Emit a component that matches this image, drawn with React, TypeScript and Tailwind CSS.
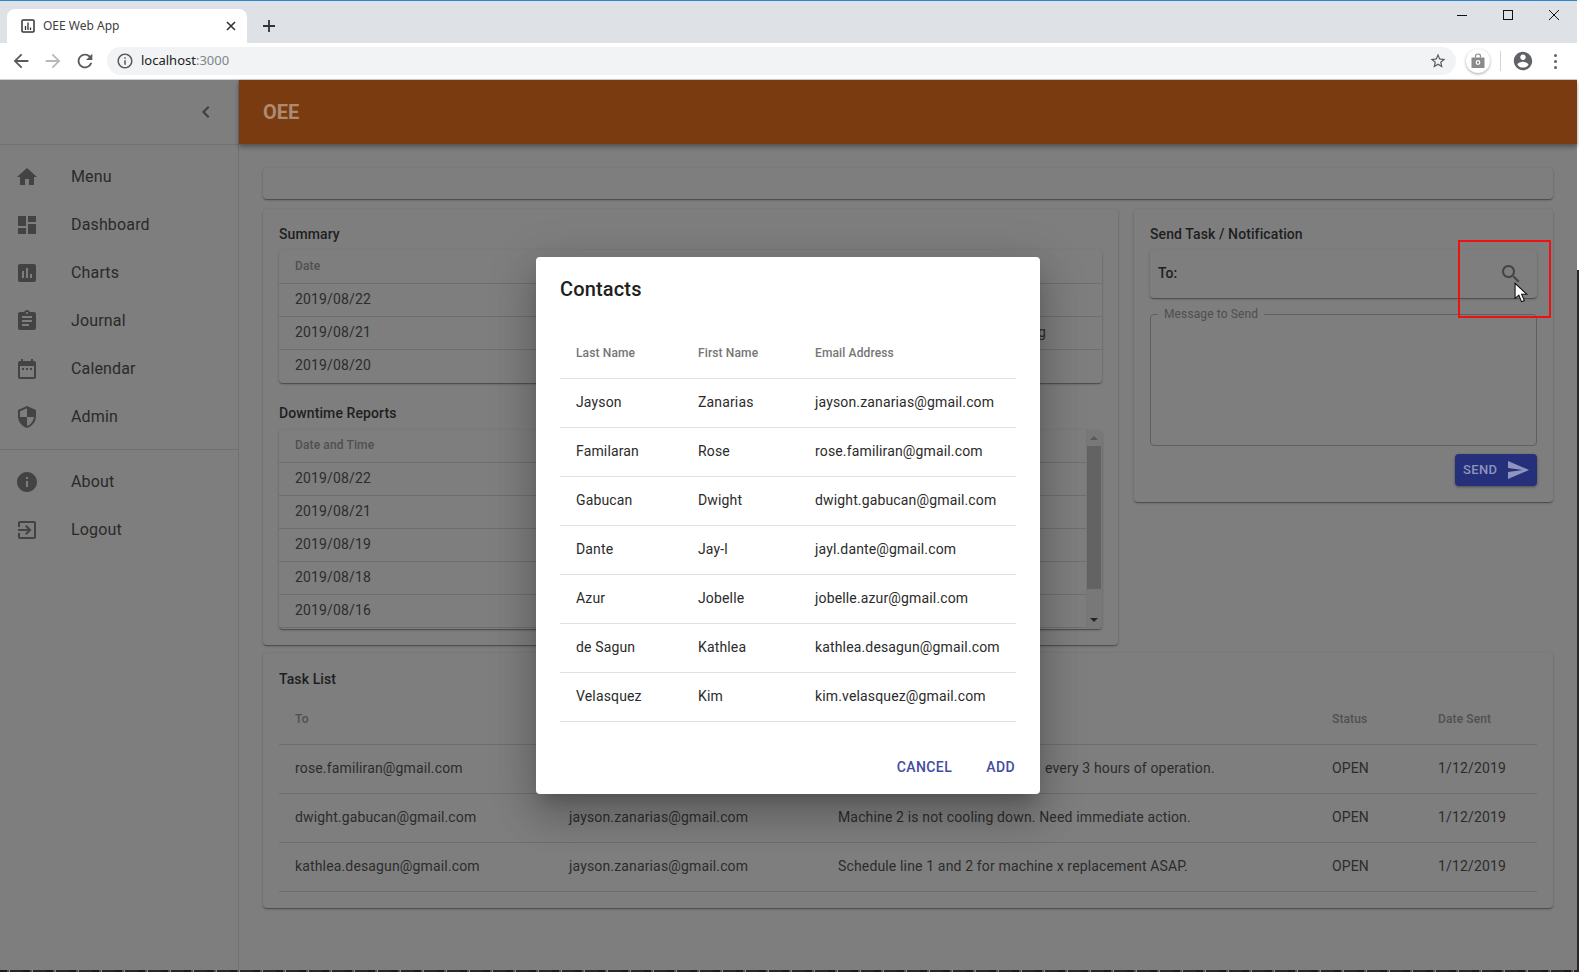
import React from "react";

const P = {
  home: "M10 20v-6h4v6h5v-8h3L12 3 2 12h3v8z",
  dash: "M3 13h8V3H3v10zm0 8h8v-6H3v6zm10 0h8V11h-8v10zm0-18v6h8V3h-8z",
  chart: "M19 3H5c-1.1 0-2 .9-2 2v14c0 1.1.9 2 2 2h14c1.1 0 2-.9 2-2V5c0-1.1-.9-2-2-2zM9 17H7v-7h2v7zm4 0h-2V7h2v10zm4 0h-2v-4h2v4z",
  journal: "M19 3h-4.18C14.4 1.84 13.3 1 12 1c-1.3 0-2.4.84-2.82 2H5c-1.1 0-2 .9-2 2v14c0 1.1.9 2 2 2h14c1.1 0 2-.9 2-2V5c0-1.1-.9-2-2-2zm-7 0c.55 0 1 .45 1 1s-.45 1-1 1-1-.45-1-1 .45-1 1-1zm2 14H7v-2h7v2zm3-4H7v-2h10v2zm0-4H7V7h10v2z",
  cal: "M9 11H7v2h2v-2zm4 0h-2v2h2v-2zm4 0h-2v2h2v-2zm2-7h-1V2h-2v2H8V2H6v2H5c-1.11 0-1.99.9-1.99 2L3 20c0 1.1.89 2 2 2h14c1.1 0 2-.9 2-2V6c0-1.1-.9-2-2-2zm0 16H5V9h14v11z",
  shield: "M12 1L3 5v6c0 5.55 3.84 10.74 9 12 5.16-1.26 9-6.45 9-12V5l-9-4zm0 10.99h7c-.53 4.12-3.28 7.79-7 8.94V12H5V6.3l7-3.11v8.8z",
  info: "M12 2C6.48 2 2 6.48 2 12s4.48 10 10 10 10-4.48 10-10S17.52 2 12 2zm1 15h-2v-6h2v6zm0-8h-2V7h2v2z",
  exit: "M10.09 15.59L11.5 17l5-5-5-5-1.41 1.41L12.67 11H3v2h9.67l-2.58 2.59zM19 3H5c-1.11 0-2 .9-2 2v4h2V5h14v14H5v-4H3v4c0 1.1.89 2 2 2h14c1.1 0 2-.9 2-2V5c0-1.1-.9-2-2-2z",
  search: "M15.5 14h-.79l-.28-.27C15.41 12.59 16 11.11 16 9.5 16 5.91 13.09 3 9.5 3S3 5.91 3 9.5 5.91 16 9.5 16c1.61 0 3.09-.59 4.23-1.57l.27.28v.79l5 4.99L20.49 19l-4.99-5zm-6 0C7.01 14 5 11.99 5 9.5S7.01 5 9.5 5 14 7.01 14 9.5 11.99 14 9.5 14z",
  send: "M2.01 21L23 12 2.01 3 2 10l15 2-15 2z",
  chevron: "M15.41 7.41L14 6l-6 6 6 6 1.41-1.41L10.83 12z",
  back: "M20 11H7.83l5.59-5.59L12 4l-8 8 8 8 1.41-1.41L7.83 13H20v-2z",
  forward: "M12 4l-1.41 1.41L16.17 11H4v2h12.17l-5.58 5.59L12 20l8-8z",
  reload: "M17.65 6.35C16.2 4.9 14.21 4 12 4c-4.42 0-7.99 3.58-7.99 8s3.57 8 7.99 8c3.73 0 6.84-2.55 7.73-6h-2.08c-.82 2.33-3.04 4-5.65 4-3.31 0-6-2.69-6-6s2.69-6 6-6c1.66 0 3.14.69 4.22 1.78L13 11h7V4l-2.35 2.35z",
  infoOut: "M11 7h2v2h-2zm0 4h2v6h-2zm1-9C6.48 2 2 6.48 2 12s4.48 10 10 10 10-4.48 10-10S17.52 2 12 2zm0 18c-4.41 0-8-3.59-8-8s3.59-8 8-8 8 3.59 8 8-3.59 8-8 8z",
  star: "M22 9.24l-7.19-.62L12 2 9.19 8.63 2 9.24l5.46 4.73L5.82 21 12 17.27 18.18 21l-1.63-7.03L22 9.24zM12 15.4l-3.76 2.27 1-4.28-3.32-2.88 4.38-.38L12 6.1l1.71 4.04 4.38.38-3.32 2.88 1 4.28L12 15.4z",
  avatar: "M12 2C6.48 2 2 6.48 2 12s4.48 10 10 10 10-4.48 10-10S17.52 2 12 2zm0 3c1.66 0 3 1.34 3 3s-1.34 3-3 3-3-1.34-3-3 1.34-3 3-3zm0 14.2c-2.5 0-4.71-1.28-6-3.22.03-1.99 4-3.08 6-3.08 1.99 0 5.97 1.09 6 3.08-1.29 1.94-3.5 3.22-6 3.22z",
};

function Icon({ d, className }: { d: string; className: string }) {
  return (
    <svg viewBox="0 0 24 24" className={className} fill="currentColor">
      <path d={d} />
    </svg>
  );
}

const paper = "rounded bg-[#7e7e7e] shadow-[0_1px_3px_rgba(0,0,0,0.2),0_1px_1px_rgba(0,0,0,0.16),0_2px_1px_-1px_rgba(0,0,0,0.16)]";
const head = "text-xs font-medium tracking-[0.01071em] text-[#505050]";
const body = "text-sm tracking-[0.01071em] text-[#2c2c2c]";
const title = "text-sm font-medium leading-5 tracking-[0.00714em] text-[#1e1e1e]";

function BrowserChrome() {
  return (
    <div className="shrink-0 font-['Noto_Sans',sans-serif]">
      <div className="h-px bg-[#2b86cd]" />
      <div className="relative flex h-[42px] items-end bg-[#dee1e6] pl-[7px]">
        <div className="flex h-[34px] w-[240px] items-center rounded-t-lg bg-white pl-[14px] pr-[11px]">
          <svg viewBox="0 0 14 14" className="h-[14px] w-[14px] text-[#333]" fill="none" stroke="currentColor">
            <rect x="1" y="1" width="12" height="12" rx="1" strokeWidth="1.5" />
            <path d="M4.5 11V7M7 11V3.5M9.5 11V8.5" strokeWidth="1.3" />
          </svg>
          <span className="ml-2 flex-1 text-xs text-[#3c4043]">OEE Web App</span>
          <svg viewBox="0 0 10 10" className="h-[10px] w-[10px] text-[#333]" fill="none" stroke="currentColor" strokeWidth="1.6">
            <path d="M1 1l8 8M9 1l-8 8" />
          </svg>
        </div>
        <svg viewBox="0 0 12 12" className="mb-[11px] ml-4 h-3 w-3 text-[#333]" fill="none" stroke="currentColor" strokeWidth="1.8">
          <path d="M6 0v12M0 6h12" />
        </svg>
        <div className="absolute right-[18px] top-[9px] flex items-center gap-[36px] text-[#111]">
          <div className="h-px w-[10px] bg-[#111]" />
          <div className="h-[10px] w-[10px] border border-[#111]" />
          <svg viewBox="0 0 10 10" className="h-[10px] w-[10px]" fill="none" stroke="currentColor">
            <path d="M0 0l10 10M10 0L0 10" />
          </svg>
        </div>
      </div>
      <div className="flex h-[37px] items-center border-b border-[#cfcfcf] bg-white pl-[10px] pr-[12px]">
        <Icon d={P.back} className="h-[22px] w-[22px] text-[#5a5a5a]" />
        <Icon d={P.forward} className="ml-[10px] h-[22px] w-[22px] text-[#b8b8b8]" />
        <Icon d={P.reload} className="ml-[10px] h-[22px] w-[22px] text-[#5a5a5a]" />
        <div className="ml-[11px] flex h-[28px] w-[1349px] items-center rounded-full bg-[#f1f3f4] pl-[9px] pr-[9px]">
          <Icon d={P.infoOut} className="h-[18px] w-[18px] text-[#5a5a5a]" />
          <span className="ml-[7px] flex-1 text-[13px] text-[#202124]">
            localhost<span className="text-[#80868b]">:3000</span>
          </span>
          <Icon d={P.star} className="h-[18px] w-[18px] text-[#5a5a5a]" />
        </div>
        <div className="ml-[10px] flex h-[24px] w-[24px] items-center justify-center rounded-full bg-white shadow-[0_1px_3px_rgba(0,0,0,0.35)]">
          <svg viewBox="0 0 16 16" className="h-[16px] w-[16px] text-[#8a8a8a]" fill="currentColor">
            <path d="M1.5 4.5h13V15h-13z" />
            <path d="M5.5 4.5V3a2.5 2 0 015 0v1.5" fill="none" stroke="currentColor" strokeWidth="1.2" />
            <circle cx="8" cy="9.5" r="1.8" fill="none" stroke="#fff" strokeWidth="1.2" />
          </svg>
        </div>
        <div className="ml-[10px] h-[20px] w-px bg-[#d5d5d5]" />
        <Icon d={P.avatar} className="ml-[11px] h-[22px] w-[22px] text-[#5f6368]" />
        <div className="ml-[20px] flex flex-col gap-[3px]">
          <div className="h-[3px] w-[3px] rounded-full bg-[#5f6368]" />
          <div className="h-[3px] w-[3px] rounded-full bg-[#5f6368]" />
          <div className="h-[3px] w-[3px] rounded-full bg-[#5f6368]" />
        </div>
      </div>
    </div>
  );
}

const nav1 = [
  ["Menu", P.home],
  ["Dashboard", P.dash],
  ["Charts", P.chart],
  ["Journal", P.journal],
  ["Calendar", P.cal],
  ["Admin", P.shield],
];
const nav2 = [
  ["About", P.info],
  ["Logout", P.exit],
];

function NavItem({ label, d }: { label: string; d: string }) {
  return (
    <div className="flex h-12 items-center pl-[15px]">
      <Icon d={d} className="h-6 w-6 text-[#434343]" />
      <span className="ml-[32px] text-base tracking-[0.00938em] text-[#2a2a2a]">{label}</span>
    </div>
  );
}

function Sidebar() {
  return (
    <div className="flex w-[239px] shrink-0 flex-col border-r border-[#717171] bg-[#7e7e7e]">
      <div className="flex h-[65px] items-center justify-end border-b border-[#717171] pr-[20px]">
        <Icon d={P.chevron} className="h-6 w-6 text-[#3e3e3e]" />
      </div>
      <div className="border-b border-[#717171] py-2">
        {nav1.map(([l, d]) => (
          <NavItem key={l} label={l} d={d} />
        ))}
      </div>
      <div className="py-2">
        {nav2.map(([l, d]) => (
          <NavItem key={l} label={l} d={d} />
        ))}
      </div>
    </div>
  );
}

function DateRow({ date, extra, last }: { date: string; extra?: string; last?: boolean }) {
  return (
    <div className={`flex h-[33px] items-center px-4 pb-[3px] ${last ? "" : "border-b border-[#6e6e6e]"}`}>
      <span className={`${body} w-[743px]`}>{date}</span>
      {extra && <span className={body}>{extra}</span>}
    </div>
  );
}

function SummaryCard() {
  return (
    <div className={`${paper} h-[436px] w-[855px] shrink-0 px-4 pt-[15px]`}>
      <div className={`${title} mb-[6px]`}>Summary</div>
      <div className={paper}>
        <div className={`flex h-[34px] items-center border-b border-[#6e6e6e] px-4 pb-px ${head}`}>Date</div>
        <DateRow date="2019/08/22" />
        <DateRow date="2019/08/21" extra="g" />
        <DateRow date="2019/08/20" last />
      </div>
      <div className={`${title} mb-[7px] mt-[20px]`}>Downtime Reports</div>
      <div className={`${paper} flex h-[199px] overflow-hidden`}>
        <div className="flex-1">
          <div className={`flex h-[33px] items-center border-b border-[#6e6e6e] px-4 pb-[2px] ${head}`}>Date and Time</div>
          {["2019/08/22", "2019/08/21", "2019/08/19", "2019/08/18", "2019/08/16"].map((d) => (
            <DateRow key={d} date={d} />
          ))}
        </div>
        <div className="flex w-[16px] flex-col items-center bg-[#787878]">
          <div className="mt-[6px] h-0 w-0 border-x-[4px] border-b-[4px] border-x-transparent border-b-[#5a5a5a]" />
          <div className="mt-[6px] h-[143px] w-[14px] bg-[#636363]" />
          <div className="mt-[29px] h-0 w-0 border-x-[4px] border-t-[4px] border-x-transparent border-t-[#262626]" />
        </div>
      </div>
    </div>
  );
}

function SendCard() {
  return (
    <div className={`${paper} relative h-[293px] w-[419px] shrink-0 px-4 pt-[15px]`}>
      <div className={`${title} mb-[6px]`}>Send Task / Notification</div>
      <div className={`${paper} flex h-[48px] items-center justify-between pl-2 pr-[14px]`}>
        <span className="pb-[2px] text-sm font-medium text-[#1e1e1e]">To:</span>
        <Icon d={P.search} className="h-6 w-6 text-[#444]" />
      </div>
      <fieldset className="mt-[8px] h-[140px] rounded border border-[#5f5f5f]">
        <legend className="ml-[7px] px-[6px] text-xs tracking-[0.01em] text-[#4f4f4f]">Message to Send</legend>
      </fieldset>
      <div className="mt-[8px] flex justify-end">
        <div className="flex h-8 w-[82px] items-center rounded bg-[#243079] pl-2 shadow-[0_1px_3px_rgba(0,0,0,0.4)]">
          <span className="text-[13px] font-medium tracking-[0.03em] text-[#8e94bd]">SEND</span>
          <Icon d={P.send} className="ml-[8px] h-6 w-6 text-[#9095bd]" />
        </div>
      </div>
      <div className="absolute left-[324px] top-[31px] h-[78px] w-[93px] border-2 border-[#ee1111]" />
      <svg viewBox="0 0 13 19" className="absolute left-[380px] top-[73px] h-[21px] w-[14px]">
        <path d="M1 1v14l3.5-3 2.5 6 2.6-1-2.5-5.8H12z" fill="#fff" stroke="#111" strokeWidth="1" />
      </svg>
    </div>
  );
}

const tasks = [
  ["rose.familiran@gmail.com", "jayson.zanarias@gmail.com", "every 3 hours of operation."],
  ["dwight.gabucan@gmail.com", "jayson.zanarias@gmail.com", "Machine 2 is not cooling down. Need immediate action."],
  ["kathlea.desagun@gmail.com", "jayson.zanarias@gmail.com", "Schedule line 1 and 2 for machine x replacement ASAP."],
];

const taskGrid = "grid grid-cols-[274px_269px_494px_106px_115px] items-center border-b border-[#6e6e6e] [&>*]:px-4";

function TaskCard() {
  return (
    <div className={`${paper} mt-2 h-[255px] px-4 pt-4`}>
      <div className={title}>Task List</div>
      <div className={`${taskGrid} mt-[5px] h-[51px] pb-px ${head}`}>
        <span>To</span>
        <span>From</span>
        <span>Message</span>
        <span>Status</span>
        <span>Date Sent</span>
      </div>
      {tasks.map((t, i) => (
        <div key={t[0]} className={`${taskGrid} h-[49px] pb-[2px] ${body}`}>
          <span>{t[0]}</span>
          <span>{t[1]}</span>
          <span>
            <span className={i === 0 ? "ml-[207px]" : ""}>{t[2]}</span>
          </span>
          <span>OPEN</span>
          <span>1/12/2019</span>
        </div>
      ))}
    </div>
  );
}

const contacts = [
  ["Jayson", "Zanarias", "jayson.zanarias@gmail.com"],
  ["Familaran", "Rose", "rose.familiran@gmail.com"],
  ["Gabucan", "Dwight", "dwight.gabucan@gmail.com"],
  ["Dante", "Jay-l", "jayl.dante@gmail.com"],
  ["Azur", "Jobelle", "jobelle.azur@gmail.com"],
  ["de Sagun", "Kathlea", "kathlea.desagun@gmail.com"],
  ["Velasquez", "Kim", "kim.velasquez@gmail.com"],
];

const contactGrid = "grid grid-cols-[122px_117px_217px] items-center border-b border-[#e0e0e0] [&>*]:px-4";

function ContactsDialog() {
  return (
    <div className="absolute inset-0 flex items-center justify-center pr-px">
      <div className="h-[537px] w-[504px] rounded bg-white px-6 pt-4 shadow-[0_11px_15px_-7px_rgba(0,0,0,0.2),0_24px_38px_3px_rgba(0,0,0,0.14),0_9px_46px_8px_rgba(0,0,0,0.12)]">
        <div className="text-xl font-medium leading-8 tracking-[0.0075em] text-[#202020]">Contacts</div>
        <div className={`${contactGrid} mt-[21px] h-[53px] pt-[3px] text-xs font-medium tracking-[0.01071em] text-[#757575]`}>
          <span>Last Name</span>
          <span>First Name</span>
          <span>Email Address</span>
        </div>
        {contacts.map((c) => (
          <div key={c[2]} className={`${contactGrid} h-[49px] pb-[2px] text-sm tracking-[0.01071em] text-[#2b2b2b]`}>
            <span>{c[0]}</span>
            <span>{c[1]}</span>
            <span>{c[2]}</span>
          </div>
        ))}
        <div className="mt-[35px] flex justify-end gap-[34px] pr-px text-sm font-medium leading-5 tracking-[0.03em] text-[#434c9f]">
          <span>CANCEL</span>
          <span>ADD</span>
        </div>
      </div>
    </div>
  );
}

export default function App() {
  return (
    <div className="flex h-[972px] w-[1579px] overflow-hidden bg-white font-['Roboto',sans-serif]">
      <div className="flex w-[1577px] shrink-0 flex-col">
        <BrowserChrome />
        <div className="relative flex h-[890px] shrink-0 bg-[#7e7e7e]">
          <Sidebar />
          <div className="flex flex-1 flex-col">
            <div className="flex h-[64px] shrink-0 items-center bg-[#7b3b10] pl-[24px] shadow-[0_2px_4px_rgba(0,0,0,0.25),0_4px_5px_rgba(0,0,0,0.14)]">
              <span className="text-xl font-bold text-[#ad8b72]">OEE</span>
            </div>
            <div className="px-6 pt-6">
              <div className={`${paper} h-[31px]`} />
              <div className="mt-[10px] flex items-start gap-4">
                <SummaryCard />
                <SendCard />
              </div>
              <TaskCard />
            </div>
          </div>
          <ContactsDialog />
        </div>
        <div className="h-[2px] shrink-0 bg-[repeating-linear-gradient(90deg,#1c1a18_0px,#1c1a18_7px,#5a4a40_7px,#5a4a40_9px,#8a8a8a_9px,#8a8a8a_10px,#2b2622_10px,#2b2622_23px)]" />
      </div>
      <div className="flex w-[2px] shrink-0 flex-col">
        <div className="h-[270px] bg-white" />
        <div className="flex-1 bg-[#2b2622]" />
      </div>
    </div>
  );
}
